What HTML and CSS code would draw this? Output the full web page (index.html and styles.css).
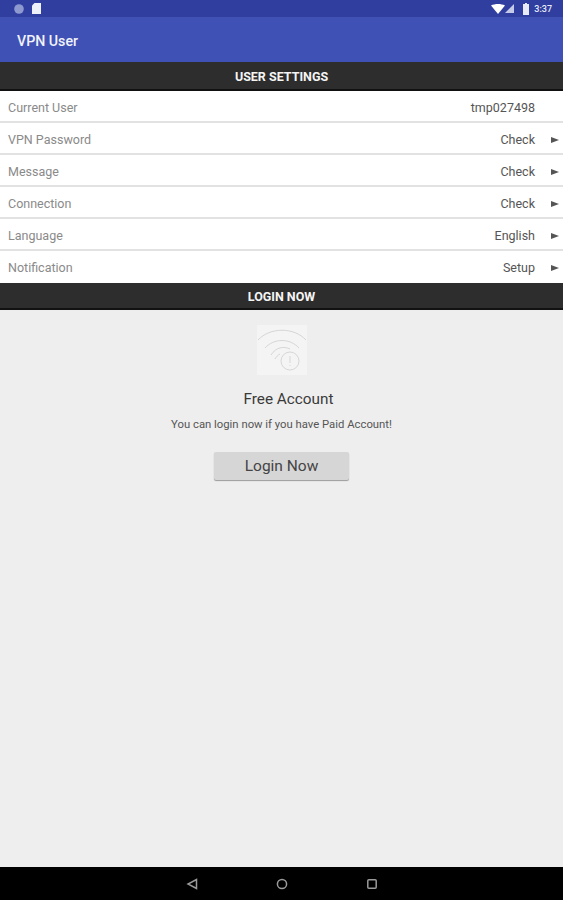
FILE: index.html
```html
<!DOCTYPE html>
<html lang="en">
<head>
    <meta charset="UTF-8">
    <meta name="viewport" content="width=device-width, initial-scale=1.0">
    <title>VPN User</title>
    <link rel="stylesheet" href="styles.css">
</head>
<body>
    <div class="screen">
        <div class="status-bar">
            <div class="status-left">
                <svg class="ic-dot" viewBox="0 0 10 10"><circle cx="5" cy="5" r="4.800" fill="#8e99d0"/></svg>
                <svg class="ic-sd" viewBox="0 0 9 11"><path d="M2.5 0H9v11H0V2.5z" fill="#eef0fa"/></svg>
            </div>
            <div class="status-right">
                <svg class="ic-wifi" viewBox="0 0 14 10"><path d="M0 1.5C4-.5 10-.5 14 1.5L7 10z" fill="#fff"/></svg>
                <svg class="ic-signal" viewBox="0 0 9 9"><path d="M9 0V9H0z" fill="#c5cae9"/></svg>
                <svg class="ic-battery" viewBox="0 0 6 12"><path d="M2 0H4V1H6V12H0V1H2z" fill="#e8eaf6"/></svg>
                <span class="clock">3:37</span>
            </div>
        </div>
        <div class="app-bar">VPN User</div>

        <div class="section-head">USER SETTINGS</div>
        <div class="row row-plain">
            <span class="row-label">Current User</span>
            <span class="row-value">tmp027498</span>
        </div>
        <div class="row">
            <span class="row-label">VPN Password</span>
            <span class="row-value">Check</span>
            <span class="row-arrow"></span>
        </div>
        <div class="row">
            <span class="row-label">Message</span>
            <span class="row-value">Check</span>
            <span class="row-arrow"></span>
        </div>
        <div class="row">
            <span class="row-label">Connection</span>
            <span class="row-value">Check</span>
            <span class="row-arrow"></span>
        </div>
        <div class="row">
            <span class="row-label">Language</span>
            <span class="row-value">English</span>
            <span class="row-arrow"></span>
        </div>
        <div class="row row-last">
            <span class="row-label">Notification</span>
            <span class="row-value">Setup</span>
            <span class="row-arrow"></span>
        </div>

        <div class="section-head section-head-small">LOGIN NOW</div>
        <div class="login">
            <div class="login-icon">
                <svg viewBox="0 0 50 50" fill="none" stroke="#d6d6d6" stroke-width="1">
                    <path d="M1 15C13 2 37 2 49 15"/>
                    <path d="M8 23C17 13 33 13 42 23"/>
                    <path d="M14 30C19 22 27 21 33 24"/>
                    <path d="M18 34C19 32 21 30 23 29"/>
                    <circle cx="33" cy="36" r="9" fill="#f4f4f4"/>
                    <path d="M33 31V38M33 40V41"/>
                </svg>
            </div>
            <div class="login-title">Free Account</div>
            <div class="login-text">You can login now if you have Paid Account!</div>
            <button class="login-btn">Login Now</button>
        </div>

        <div class="nav-bar">
            <svg viewBox="0 0 12 12" fill="none" stroke="#9a9a9a" stroke-width="1.5"><path d="M10.5 1.5V10.500L2 6z"/></svg>
            <svg viewBox="0 0 12 12" fill="none" stroke="#9a9a9a" stroke-width="1.5"><circle cx="6" cy="6" r="4.600"/></svg>
            <svg viewBox="0 0 12 12" fill="none" stroke="#9a9a9a" stroke-width="1.5"><rect x="1.800" y="1.800" width="8.400" height="8.400" rx="1"/></svg>
        </div>
    </div>
</body>
</html>
```

FILE: styles.css
```css
html, body {
    margin: 0;
    padding: 0;
}
body {
    font-family: Roboto, "Liberation Sans", sans-serif;
    background-color: #eeeeee;
}
.screen {
    height: 900px;
    display: flex;
    flex-direction: column;
    overflow: hidden;
}
.status-bar {
    height: 17px;
    background-color: #303f9f;
    display: flex;
    align-items: center;
    justify-content: space-between;
    padding: 0 11px 0 14px;
}
.status-left, .status-right {
    display: flex;
    align-items: center;
}
.ic-dot {
    width: 10px;
    height: 10px;
    margin-right: 8px;
}
.ic-sd {
    width: 9px;
    height: 11px;
}
.ic-wifi {
    width: 14px;
    height: 10px;
}
.ic-signal {
    width: 9px;
    height: 9px;
    margin-right: 9px;
}
.ic-battery {
    width: 6px;
    height: 12px;
    margin-right: 5px;
}
.clock {
    font-size: 9px;
    font-weight: 500;
    color: #e8eaf6;
}
.app-bar {
    height: 45px;
    background-color: #3f51b5;
    color: #f2f3fb;
    font-size: 14.200px;
    font-weight: 500;
    line-height: 49px;
    padding-left: 17px;
}
.section-head {
    height: 27px;
    line-height: 30px;
    background-color: #2d2d2d;
    border-bottom: 2px solid #111;
    color: #f5f5f5;
    font-size: 12.500px;
    font-weight: 700;
    text-align: center;
}
.section-head-small {
    height: 25px;
    line-height: 28px;
}
.row {
    height: 28px;
    padding: 2px 0 0 8px;
    background-color: #fff;
    border-bottom: 2px solid #e2e2e2;
    display: flex;
    align-items: center;
    font-size: 12.500px;
}
.row-last {
    height: 28px;
    padding-bottom: 2px;
    border-bottom: none;
}
.row-label {
    flex: 1;
    color: #8a8a8a;
}
.row-value {
    color: #555;
}
.row-arrow {
    width: 0;
    height: 0;
    margin: 1px 4px 0 16px;
    border-left: 8px solid #555;
    border-top: 3px solid transparent;
    border-bottom: 3px solid transparent;
}
.row-plain .row-value {
    margin-right: 28px;
}
.login {
    flex: 1;
    display: flex;
    flex-direction: column;
    align-items: center;
}
.login-icon {
    width: 50px;
    height: 50px;
    margin-top: 15px;
    background-color: #f4f4f4;
}
.login-icon svg {
    display: block;
    width: 50px;
    height: 50px;
}
.login-title {
    margin-top: 15px;
    margin-left: 14px;
    font-size: 15.300px;
    line-height: 18px;
    color: #3a3a3a;
}
.login-text {
    margin-top: 10px;
    font-size: 11.300px;
    line-height: 14px;
    color: #555;
}
.login-btn {
    width: 135px;
    height: 28px;
    margin-top: 20px;
    padding: 0;
    border: none;
    border-radius: 2px;
    background-color: #d6d6d6;
    box-shadow: 0 1px 1px rgba(0,0,0,0.35);
    color: #444;
    font-family: inherit;
    font-size: 15.500px;
}
.nav-bar {
    height: 33px;
    background-color: #000;
    display: flex;
    align-items: center;
    justify-content: center;
    gap: 78px;
}
.nav-bar svg {
    width: 12px;
    height: 12px;
}
```
